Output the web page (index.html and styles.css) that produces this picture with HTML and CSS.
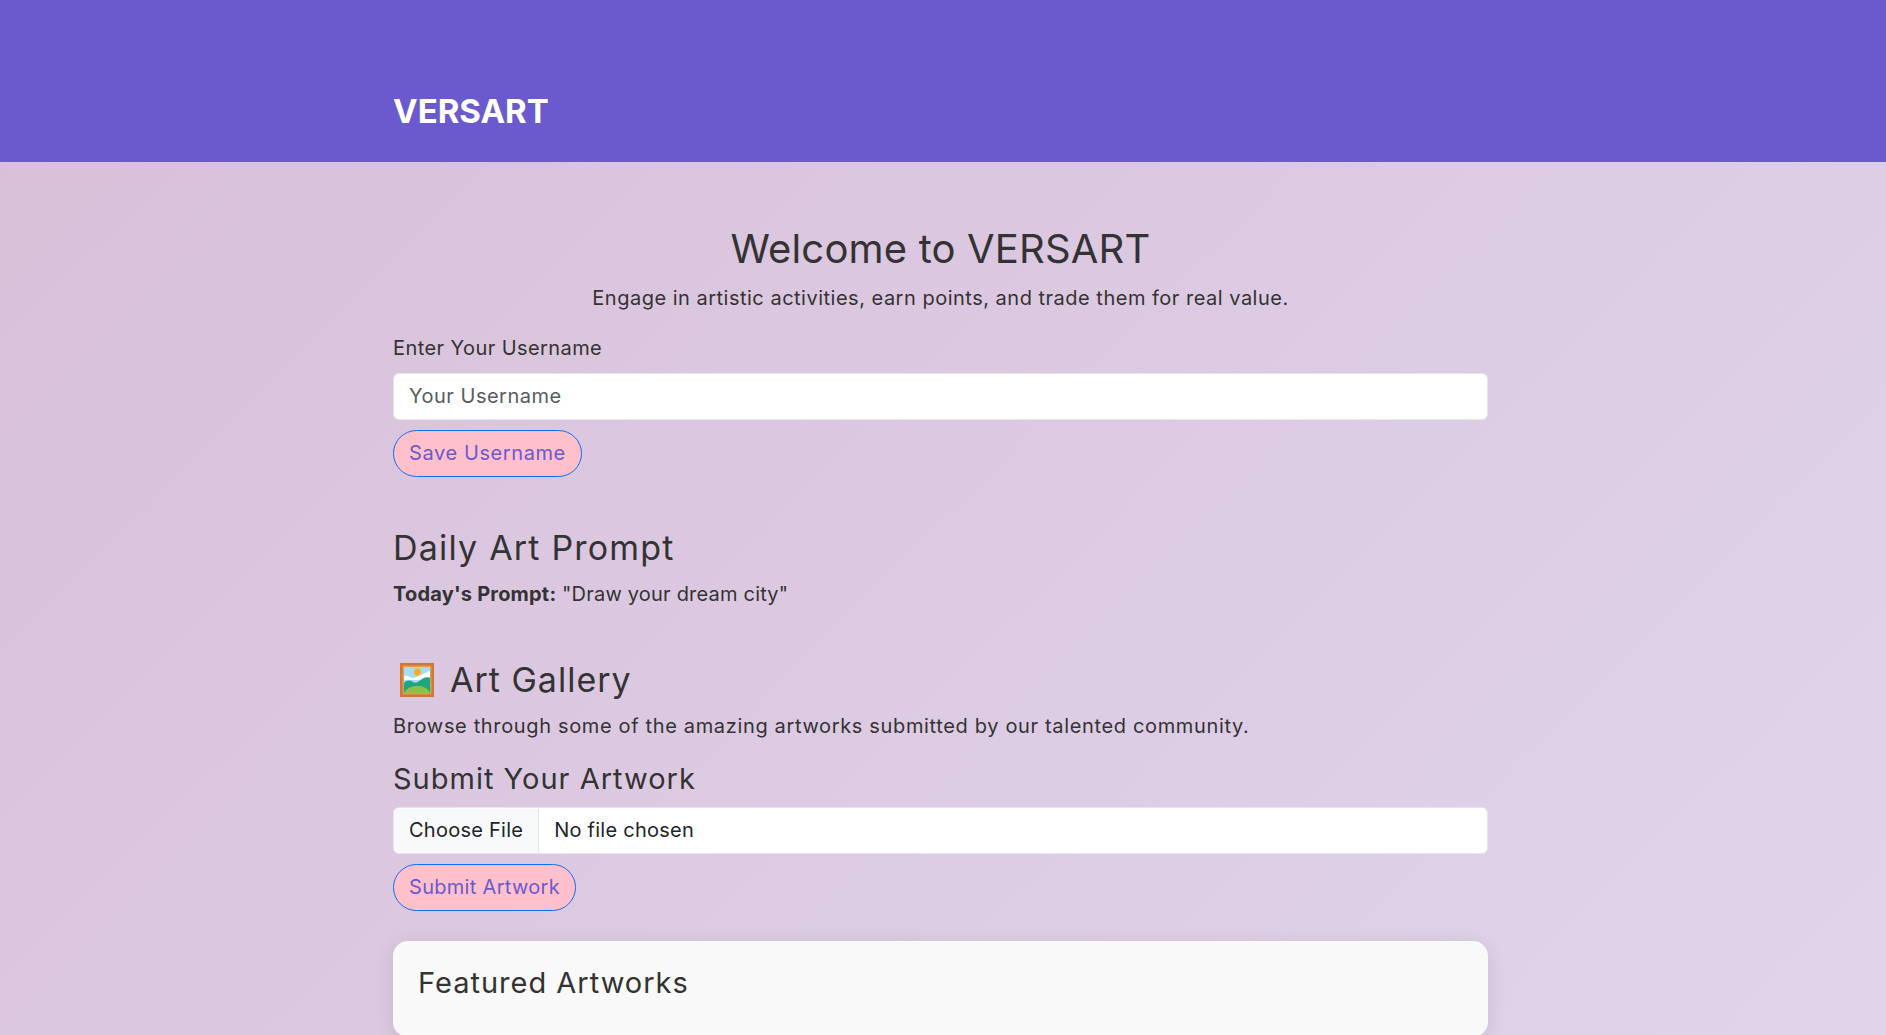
FILE: index.html
```html
<!DOCTYPE html>
<html lang="en">
<head>
  <meta charset="UTF-8" />
  <meta name="viewport" content="width=device-width, initial-scale=1.0"/>
  <title>VERSART</title>
  <link rel="stylesheet" href="styles.css">
</head>
<body>

  <header class="site-header">
    <div class="container">
      <div class="brand">VERSART</div>
    </div>
  </header>

  <main class="container page">
    <section class="welcome">
      <h1>Welcome to VERSART</h1>
      <p>Engage in artistic activities, earn points, and trade them for real value.</p>
    </section>

    <section class="username">
      <label class="field-label" for="username">Enter Your Username</label>
      <input class="field" id="username" type="text" placeholder="Your Username" />
      <button class="pill-btn save-btn">Save Username</button>
    </section>

    <section class="prompt">
      <h2>Daily Art Prompt</h2>
      <p><strong>Today's Prompt:</strong> "Draw your dream city"</p>
    </section>

    <section class="gallery">
      <h2 class="gallery-title">
        <svg class="gallery-icon" viewBox="0 0 34 34" aria-hidden="true">
          <rect width="34" height="34" fill="#c8793a"/>
          <rect x="2.5" y="2.5" width="29" height="29" fill="#e59a52"/>
          <rect x="4" y="4" width="26" height="26" fill="#a6dcf6"/>
          <path d="M4 13c4-1 6 2 9 2s6-3 10-4 5-3 7-3v6c-3 1-5 2-7 3H4z" fill="#fff"/>
          <path d="M4 20c3-3 6-3 9-1s6-1 9-3 6-2 8-1v15H4z" fill="#1fa67e"/>
          <path d="M4 30c3-6 9-7 14-7s10 2 12 7z" fill="#8fbf45"/>
          <circle cx="17.5" cy="9" r="3.6" fill="#f7a928" stroke="#f6c24a"/>
        </svg>
        <span>Art Gallery</span>
      </h2>
      <p class="gallery-intro">Browse through some of the amazing artworks submitted by our talented community.</p>
      <h3>Submit Your Artwork</h3>
      <input class="field file-field" type="file" />
      <button class="pill-btn submit-btn">Submit Artwork</button>
    </section>

    <section class="featured">
      <h3>Featured Artworks</h3>
    </section>
  </main>

</body>
</html>
```

FILE: styles.css
```css
:root {
  --brand: #6a5acd;
  --text: #333;
  --pink: #ffc0cb;
  --line: #e4e6ea;
}

* {
  box-sizing: border-box;
}

html, body {
  height: 100%;
}

body {
  margin: 0;
  font-family: Inter, "Noto Sans", sans-serif;
  color: var(--text);
  /* the real page is much taller than the window */
  background: linear-gradient(135deg, #d8bfd8, #e6e6fa) 0 0 / 100% 3400px no-repeat;
  overflow: hidden;
}

.container {
  width: 1095px;
  margin-left: 393px;
}

.site-header {
  background-color: var(--brand);
  height: 162px;
  padding-top: 91px;
}

.brand {
  font-size: 33px;
  line-height: 40px;
  font-weight: 700;
  color: #fff;
}

h1, h2, h3, p {
  margin: 0;
}

h1, h2, h3 {
  font-weight: 400;
}

p, .field-label {
  font-size: 20px;
  line-height: 28px;
}

.page {
  padding-top: 63px;
}

.welcome {
  text-align: center;
}

.welcome h1 {
  font-size: 40px;
  line-height: 48px;
  letter-spacing: 0.17px;
  margin-bottom: 11px;
}

.welcome p {
  letter-spacing: 0.5px;
}

.username {
  margin-top: 22px;
}

.field-label {
  display: block;
  margin-bottom: 11px;
  letter-spacing: 0.42px;
}

.field {
  display: block;
  width: 100%;
  height: 47px;
  padding: 0 15px 2px;
  font-family: inherit;
  font-size: 20px;
  letter-spacing: 0.5px;
  color: #212529;
  background-color: #fff;
  border: 1px solid var(--line);
  border-radius: 6px;
}

.field::placeholder {
  color: #595c5f;
}

.file-field {
  padding: 0;
  line-height: 45px;
  letter-spacing: 0.25px;
  overflow: hidden;
}

.file-field::file-selector-button {
  height: 45px;
  padding: 0 15px 2px;
  margin: 0 15px 0 0;
  font-family: inherit;
  font-size: 20px;
  letter-spacing: 0.25px;
  color: #212529;
  background-color: #f8f9fa;
  border: none;
  border-right: 1px solid var(--line);
}

.pill-btn {
  display: block;
  height: 47px;
  margin-top: 10px;
  padding: 0 15px 2px;
  font-family: inherit;
  font-size: 20px;
  letter-spacing: 0.6px;
  color: var(--brand);
  background-color: var(--pink);
  border: 1px solid #0d6efd;
  border-radius: 24px;
}

.submit-btn {
  letter-spacing: 0.3px;
}

h2 {
  font-size: 34px;
  line-height: 40px;
}

.prompt {
  margin-top: 51px;
}

.prompt h2 {
  letter-spacing: 1.2px;
  margin-bottom: 12px;
}

.prompt p {
  letter-spacing: 0.2px;
}

.prompt strong {
  font-weight: 700;
}

.gallery {
  margin-top: 52px;
}

.gallery-title {
  display: flex;
  align-items: center;
  gap: 16px;
  padding-left: 7px;
  margin-bottom: 12px;
  letter-spacing: 1px;
}

.gallery-icon {
  width: 34px;
  height: 34px;
}

.gallery-intro {
  letter-spacing: 0.65px;
}

h3 {
  font-size: 29px;
  line-height: 36px;
  letter-spacing: 1px;
}

.gallery h3 {
  margin: 21px 0 10px;
}

.featured {
  margin-top: 30px;
  height: 96px;
  padding: 24px 25px;
  background-color: #f9f9f9;
  border-radius: 15px;
  box-shadow: 0 4px 20px rgba(0, 0, 0, 0.1);
}

.featured h3 {
  letter-spacing: 1px;
}
```
